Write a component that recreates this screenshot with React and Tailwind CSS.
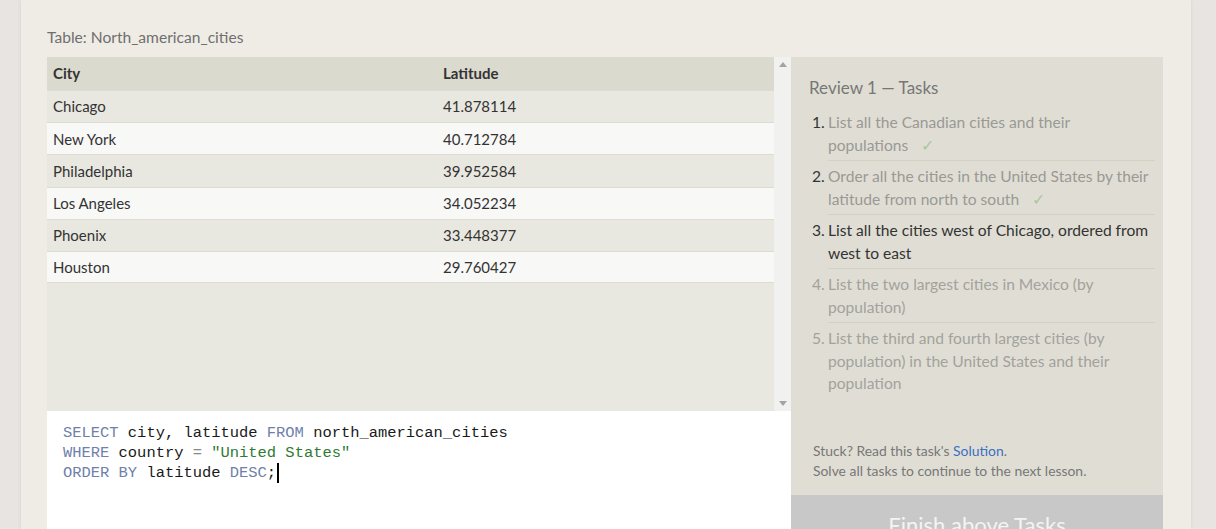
import React from "react";

const rows = [
  ["Chicago", "41.878114"],
  ["New York", "40.712784"],
  ["Philadelphia", "39.952584"],
  ["Los Angeles", "34.052234"],
  ["Phoenix", "33.448377"],
  ["Houston", "29.760427"],
];

const tasks = [
  { n: "1.", text: "List all the Canadian cities and their", last: "populations", state: "done" },
  { n: "2.", text: "Order all the cities in the United States by their latitude from north to", last: "south", state: "done" },
  { n: "3.", text: "List all the cities west of Chicago, ordered from west to east", state: "current" },
  { n: "4.", text: "List the two largest cities in Mexico (by population)", state: "todo" },
  { n: "5.", text: "List the third and fourth largest cities (by population) in the United States and their population", state: "todo" },
];

function Task({ t }) {
  const numColor = t.state === "todo" ? "text-[#a3a29d]" : "text-[#333333]";
  const textColor =
    t.state === "current" ? "text-[#333333]" : t.state === "done" ? "text-[#9a9994]" : "text-[#a3a29d]";
  return (
    <li className="flex">
      <span className={`w-[16px] shrink-0 pt-[4px] ${numColor}`}>{t.n}</span>
      <div className={`flex-1 pt-[4px] pb-[4px] ${t.n !== "5." ? "border-b border-[#d3d1c6]" : ""} ${textColor}`}>
        {t.text}
        {t.last && (
          <>
            {" "}
            <span className="whitespace-nowrap">
              {t.last}
              <span className="ml-[13px] text-[#a9c6a2]">✓</span>
            </span>
          </>
        )}
      </div>
    </li>
  );
}

export default function App() {
  return (
    <div
      className="w-[1216px] h-[529px] overflow-hidden bg-[#e7e4e1] flex pl-[21px]"
      style={{ fontFamily: "Lato, 'Open Sans', sans-serif" }}
    >
      <div className="w-[1170px] h-full bg-[#efece6] pl-[26px] pr-[27px] pt-[27px] shadow-[0_0_4px_rgba(0,0,0,0.08)]">
        <div className="text-[15.6px] leading-[20px] text-[#6f6f6f] mb-[10px]">Table: North_american_cities</div>
        <div className="flex">
          {/* left column */}
          <div className="w-[744px] shrink-0 flex flex-col">
            <div className="h-[354px] flex">
              <div className="w-[727px] bg-[#e9e8e0] text-[15px] text-[#333333]">
                <div className="flex h-[33px] items-center bg-[#dbdacf] font-bold">
                  <div className="w-[390px] pl-[6px]">City</div>
                  <div className="pl-[6px]">Latitude</div>
                </div>
                {rows.map((r, i) => (
                  <div
                    key={r[0]}
                    className={`flex h-[32.2px] items-center border-t border-[#dddcd4] ${
                      i % 2 === 0 ? "bg-[#e9e8e0]" : "bg-[#f8f8f7]"
                    } ${i === rows.length - 1 ? "border-b" : ""}`}
                  >
                    <div className="w-[390px] pl-[6px]">{r[0]}</div>
                    <div className="pl-[6px]">{r[1]}</div>
                  </div>
                ))}
              </div>
              <div className="w-[17px] bg-[#f1f1ef] flex flex-col items-center justify-between py-[5px]">
                <svg width="8" height="5" viewBox="0 0 8 5">
                  <path d="M4 0 L8 5 L0 5 Z" fill="#a3a3a3" />
                </svg>
                <svg width="8" height="5" viewBox="0 0 8 5">
                  <path d="M0 0 L8 0 L4 5 Z" fill="#a3a3a3" />
                </svg>
              </div>
            </div>
            <div
              className="h-[200px] bg-white pl-[16px] pt-[12px] text-[15.45px] leading-[20px] text-[#1a1a1a]"
              style={{ fontFamily: "'Liberation Mono', 'DejaVu Sans Mono', monospace" }}
            >
              <div className="whitespace-pre">
                <span className="text-[#6f80ab]">SELECT</span> city, latitude <span className="text-[#6f80ab]">FROM</span> north_american_cities
              </div>
              <div className="whitespace-pre">
                <span className="text-[#6f80ab]">WHERE</span> country <span className="text-[#888888]">=</span>{" "}
                <span className="text-[#2f7a32]">"United States"</span>
              </div>
              <div className="whitespace-pre flex items-center">
                <span className="text-[#6f80ab]">ORDER BY</span>&nbsp;latitude&nbsp;<span className="text-[#6f80ab]">DESC</span>;
                <span className="inline-block w-[2px] h-[20px] bg-black ml-[1px]" />
              </div>
            </div>
          </div>
          {/* right column */}
          <div className="w-[372px] shrink-0 flex flex-col">
            <div className="h-[438px] bg-[#e0ded4] flex flex-col justify-between">
              <div className="pl-[18px] pr-[8px] pt-[19px]">
                <div className="text-[17px] leading-[24px] text-[#777777] mb-[7px]">Review 1 — Tasks</div>
                <ol className="pl-[3px] text-[15.6px] leading-[22.5px]">
                  {tasks.map((t) => (
                    <Task key={t.n} t={t} />
                  ))}
                </ol>
              </div>
              <div className="pl-[22px] pb-[14px] text-[13.9px] leading-[20px] text-[#777777]">
                <div>
                  Stuck? Read this task's <span className="text-[#3b6fc4]">Solution</span>.
                </div>
                <div>Solve all tasks to continue to the next lesson.</div>
              </div>
            </div>
            <div className="h-[70px] bg-[#c8c8c8] flex justify-center pt-[16px] text-[22px] leading-[28px] text-[#f4f4f4]">
              Finish above Tasks
            </div>
          </div>
        </div>
      </div>
    </div>
  );
}
